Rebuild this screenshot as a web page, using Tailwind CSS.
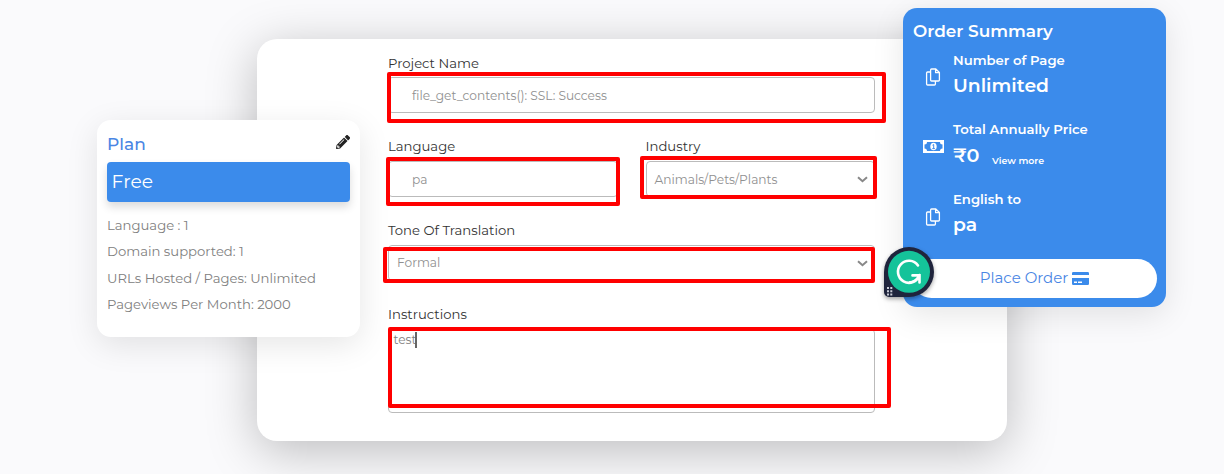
<!DOCTYPE html>
<html lang="en">
<head>
<meta charset="utf-8">
<title>Order</title>
<script src="https://cdn.jsdelivr.net/npm/@tailwindcss/browser@4"></script>
</head>
<body class="w-[1224px] h-[474px] overflow-hidden bg-[#fafafc] font-['Montserrat','Inter',sans-serif] text-[13.2px]">
<main class="relative flex items-start h-[474px] pl-[97px]">

  <aside class="z-10 mt-[120px] w-[263px] h-[217px] shrink-0 rounded-[14px] bg-white px-[10px] pt-3 shadow-[0_8px_32px_rgba(0,0,0,0.10)]">
    <div class="flex items-center justify-between h-[24px]">
      <h2 class="pt-[2px] text-[17px] font-medium text-[#4a86e4]">Plan</h2>
      <svg class="size-[14px] mb-[5px]" viewBox="0 0 512 512" fill="#222"><path d="M498 142l-46 46c-5 5-13 5-17 0L324 77c-5-5-5-12 0-17l46-46c19-19 49-19 68 0l60 60c19 19 19 49 0 68zM284 100L22 362 0 484c-3 16 12 30 28 28l122-22 262-262c5-5 5-13 0-17L301 100c-4-5-12-5-17 0zM124 340c-5-6-5-14 0-20l154-154c6-5 14-5 20 0s5 14 0 20L144 340c-6 5-14 5-20 0zm-36 84h48v36l-65 12-31-31 12-65h36v48z"/></svg>
    </div>
    <div class="mt-[6px] flex items-center h-10 rounded-[4px] bg-[#3b8beb] pl-[4.500px] text-[18.7px] text-white shadow-[0_5px_8px_rgba(0,0,0,0.14)]">Free</div>
    <ul class="mt-[10px] text-[#808080] leading-[26.4px]">
      <li>Language : 1</li>
      <li>Domain supported: 1</li>
      <li>URLs Hosted / Pages: Unlimited</li>
      <li>Pageviews Per Month: 2000</li>
    </ul>
  </aside>

  <form class="mt-[39px] -ml-[103px] w-[750px] h-[402px] shrink-0 rounded-[20px] bg-white pl-[131px] pr-[132px] pt-3 shadow-[0_10px_50px_rgba(0,0,0,0.25)] text-[#333]">
    <div class="h-[84px]">
      <label class="block leading-[24px] mb-[2px]">Project Name</label>
      <div class="flex items-center h-9 rounded-[4px] border border-[#bbb] pl-[23px] text-[#909090] text-[12.2px] pt-[2px]">file_get_contents(): SSL: Success</div>
    </div>
    <div class="grid grid-cols-2 gap-[28px] h-[84px]">
      <div>
        <label class="block leading-[22px] mb-[4px]">Language</label>
        <div class="flex items-center h-9 rounded-[4px] border border-[#bbb] pl-[23px] text-[#909090] text-[12.2px] pt-[2px]">pa</div>
      </div>
      <div>
        <label class="block leading-[22px] mb-[4px]">Industry</label>
        <div class="flex items-center justify-between h-9 rounded-[4px] border border-[#bbb] pl-[8px] pr-[6px] text-[#909090] text-[12.2px]"><span class="pt-[2px]">Animals/Pets/Plants</span>
          <svg class="w-[11px] h-[7px]" viewBox="0 0 11 7" fill="none" stroke="#888" stroke-width="2"><path d="M1 1.2l4.500 4 4.500-4"/></svg></div>
      </div>
    </div>
    <div class="h-[84px]">
      <label class="block leading-[22px] mb-[4px]">Tone Of Translation</label>
      <div class="flex items-center justify-between h-9 rounded-[4px] border border-[#bbb] pl-[8px] pr-[6px] text-[#909090] text-[12.2px]"><span>Formal</span>
        <svg class="w-[11px] h-[7px]" viewBox="0 0 11 7" fill="none" stroke="#888" stroke-width="2"><path d="M1 1.2l4.500 4 4.500-4"/></svg></div>
    </div>
    <label class="block leading-[22px] mb-[4px]">Instructions</label>
    <div class="flex items-start h-[84px] rounded-[4px] border border-[#bbb] pl-[4.500px] pt-[2px] text-[#808080] text-[12.2px] leading-4">test<i class="-ml-[1px] w-[1.5px] h-4 bg-[#666]"></i></div>
  </form>

  <section class="z-10 mt-2 -ml-[104px] w-[263px] h-[299px] shrink-0 rounded-[14px] bg-[#3b8beb] text-white pt-[12px] shadow-[0_8px_32px_rgba(0,0,0,0.10)]">
    <h2 class="pl-[10px] text-[16.9px] leading-[22px] font-semibold">Order Summary</h2>
    <div class="mt-[8px] flex h-[69px] pl-[20px]">
      <svg class="w-[20px] h-[18px] mt-[18px] mr-[10px]" viewBox="0 0 20 18" fill="none" stroke="#fff" stroke-width="1.3" stroke-linejoin="round"><path d="M8.600 1h4.200l3.600 3.500v7.500a1 1 0 0 1-1 1H8.600a1 1 0 0 1-1-1V2a1 1 0 0 1 1-1zM12.600 1.200v3.500h3.600M7.400 4H4.600a1 1 0 0 0-1 1v11a1 1 0 0 0 1 1h6.800a1 1 0 0 0 1-1V13.200"/></svg>
      <div><p class="leading-[20px] font-semibold">Number of Page</p><p class="mt-[2px] text-[18.8px] leading-[28px] font-semibold">Unlimited</p></div>
    </div>
    <div class="flex h-[70px] pl-[20px]">
      <svg class="w-[21px] h-[13px] mt-[21px] mr-[9px]" viewBox="0 0 21 13"><path fill="#fff" fill-rule="evenodd" d="M0 0h21v13H0zM4 2a2.500 2.500 0 0 1-2.500 2.500v4A2.500 2.500 0 0 1 4 11h13a2.500 2.500 0 0 1 2.500-2.500v-4A2.500 2.500 0 0 1 17 2z"/><ellipse cx="10.500" cy="6.500" rx="3.200" ry="3.800" fill="#fff"/><path d="M9.500 5.200l1.200-.7v4M9.300 8.600h2.600" stroke="#3b8beb" fill="none"/></svg>
      <div><p class="leading-[20px] font-semibold">Total Annually Price</p><p class="mt-[2px] flex items-baseline text-[19.2px] leading-[28px] font-semibold"><span class="w-[27px]">₹0</span><span class="pt-[2px] ml-[12px] text-[9.4px] translate-y-[2px]">View more</span></p></div>
    </div>
    <div class="flex h-[70px] pl-[20px]">
      <svg class="w-[20px] h-[18px] mt-[19px] mr-[10px]" viewBox="0 0 20 18" fill="none" stroke="#fff" stroke-width="1.3" stroke-linejoin="round"><path d="M8.600 1h4.200l3.600 3.500v7.500a1 1 0 0 1-1 1H8.600a1 1 0 0 1-1-1V2a1 1 0 0 1 1-1zM12.600 1.200v3.500h3.600M7.400 4H4.600a1 1 0 0 0-1 1v11a1 1 0 0 0 1 1h6.800a1 1 0 0 0 1-1V13.200"/></svg>
      <div><p class="leading-[20px] font-semibold">English to</p><p class="mt-[2px] text-[18.8px] leading-[28px] font-semibold">pa</p></div>
    </div>
    <div class="ml-[9px] w-[245px] h-[39px] rounded-full bg-white flex items-center justify-center gap-[4px] text-[15px] text-[#4a86e4]"><span>Place Order</span>
      <svg class="w-[17px] h-[13px]" viewBox="0 0 17 13" fill="#3b8beb"><path d="M1.200 0h14.600A1.200 1.200 0 0 1 17 1.200V3H0V1.200A1.200 1.200 0 0 1 1.200 0zM0 6h17v5.800A1.200 1.200 0 0 1 15.800 13H1.200A1.200 1.200 0 0 1 0 11.800z"/><path fill="#fff" d="M2 9.500h3V11H2zM6 9.500h4V11H6z"/></svg></div>
  </section>

  <!-- annotation frames laid over the form fields -->
  <div class="absolute z-20 left-[387px] top-[72px] w-[499px] h-[51px] rounded-[2px] border-4 border-[#f00]"></div>
  <div class="absolute z-20 left-[386px] top-[157px] w-[234px] h-[49px] rounded-[2px] border-4 border-[#f00]"></div>
  <div class="absolute z-20 left-[640px] top-[156px] w-[237px] h-[43px] rounded-[2px] border-4 border-[#f00]"></div>
  <div class="absolute z-20 left-[383px] top-[247px] w-[492px] h-[36px] rounded-[2px] border-4 border-[#f00]"></div>
  <div class="absolute z-20 left-[388px] top-[327px] w-[503px] h-[81px] rounded-[2px] border-4 border-[#f00]"></div>

  <!-- floating writing-assistant badge -->
  <svg class="absolute z-30 left-[884px] top-[247px] size-[50px] overflow-visible drop-shadow-[0_2px_2px_rgba(0,0,0,0.35)]" viewBox="0 0 50 50">
    <path fill="#1f243c" d="M25 0a25 25 0 0 1 0 50H5a5 5 0 0 1-5-5V25A25 25 0 0 1 25 0z"/>
    <circle cx="25" cy="24.800" r="21" fill="#15c39a"/>
    <path d="M34 18.500A11 11 0 1 0 35.500 28M28.500 28.400h7v7" fill="none" stroke="#fff" stroke-width="2.600" stroke-linecap="round" stroke-linejoin="miter"/>
    <path d="M35.300 28.500Q32 35 25 35.500" fill="none" stroke="#fff" stroke-width="2.600"/>
    <path fill="#c9cbd6" d="M3 40h2v2H3zM6.300 40h2v2h-2zM3 43.200h2v2H3zM6.300 43.200h2v2h-2zM3 46.400h2v2H3zM6.300 46.400h2v2h-2z"/>
  </svg>
</main>
</body>
</html>
